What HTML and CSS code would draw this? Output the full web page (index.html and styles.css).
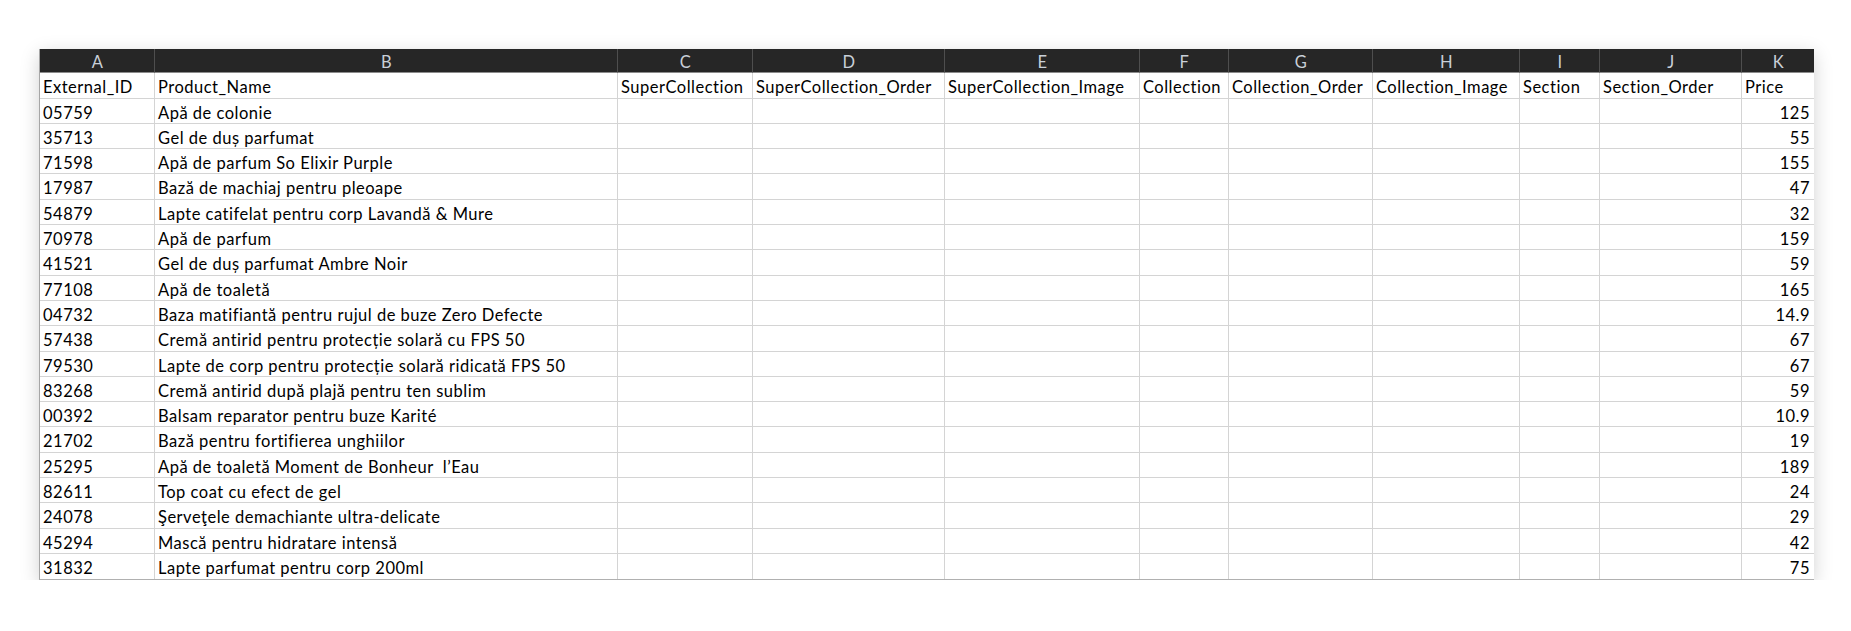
FILE: index.html
```html
<!DOCTYPE html>
<html lang="ro">
<head>
<meta charset="utf-8">
<title>Sheet</title>
<link rel="stylesheet" href="styles.css">
</head>
<body>
<div class="page">
  <div class="sheet">
    <div class="row head">
      <div class="c">A</div><div class="c">B</div><div class="c">C</div><div class="c">D</div><div class="c">E</div><div class="c">F</div><div class="c">G</div><div class="c">H</div><div class="c">I</div><div class="c">J</div><div class="c">K</div>
    </div>
    <div class="row">
      <div class="c">External_ID</div><div class="c">Product_Name</div><div class="c">SuperCollection</div><div class="c">SuperCollection_Order</div><div class="c">SuperCollection_Image</div><div class="c">Collection</div><div class="c">Collection_Order</div><div class="c">Collection_Image</div><div class="c">Section</div><div class="c">Section_Order</div><div class="c">Price</div>
    </div>
    <div class="row"><div class="c">05759</div><div class="c">Apă de colonie</div><div class="c"></div><div class="c"></div><div class="c"></div><div class="c"></div><div class="c"></div><div class="c"></div><div class="c"></div><div class="c"></div><div class="c num">125</div></div>
    <div class="row"><div class="c">35713</div><div class="c">Gel de duș parfumat</div><div class="c"></div><div class="c"></div><div class="c"></div><div class="c"></div><div class="c"></div><div class="c"></div><div class="c"></div><div class="c"></div><div class="c num">55</div></div>
    <div class="row"><div class="c">71598</div><div class="c">Apă de parfum So Elixir Purple</div><div class="c"></div><div class="c"></div><div class="c"></div><div class="c"></div><div class="c"></div><div class="c"></div><div class="c"></div><div class="c"></div><div class="c num">155</div></div>
    <div class="row"><div class="c">17987</div><div class="c">Bază de machiaj pentru pleoape</div><div class="c"></div><div class="c"></div><div class="c"></div><div class="c"></div><div class="c"></div><div class="c"></div><div class="c"></div><div class="c"></div><div class="c num">47</div></div>
    <div class="row"><div class="c">54879</div><div class="c">Lapte catifelat pentru corp Lavandă &amp; Mure</div><div class="c"></div><div class="c"></div><div class="c"></div><div class="c"></div><div class="c"></div><div class="c"></div><div class="c"></div><div class="c"></div><div class="c num">32</div></div>
    <div class="row"><div class="c">70978</div><div class="c">Apă de parfum</div><div class="c"></div><div class="c"></div><div class="c"></div><div class="c"></div><div class="c"></div><div class="c"></div><div class="c"></div><div class="c"></div><div class="c num">159</div></div>
    <div class="row"><div class="c">41521</div><div class="c">Gel de duș parfumat Ambre Noir</div><div class="c"></div><div class="c"></div><div class="c"></div><div class="c"></div><div class="c"></div><div class="c"></div><div class="c"></div><div class="c"></div><div class="c num">59</div></div>
    <div class="row"><div class="c">77108</div><div class="c">Apă de toaletă</div><div class="c"></div><div class="c"></div><div class="c"></div><div class="c"></div><div class="c"></div><div class="c"></div><div class="c"></div><div class="c"></div><div class="c num">165</div></div>
    <div class="row"><div class="c">04732</div><div class="c">Baza matifiantă pentru rujul de buze Zero Defecte</div><div class="c"></div><div class="c"></div><div class="c"></div><div class="c"></div><div class="c"></div><div class="c"></div><div class="c"></div><div class="c"></div><div class="c num">14.9</div></div>
    <div class="row"><div class="c">57438</div><div class="c">Cremă antirid pentru protecție solară cu FPS 50</div><div class="c"></div><div class="c"></div><div class="c"></div><div class="c"></div><div class="c"></div><div class="c"></div><div class="c"></div><div class="c"></div><div class="c num">67</div></div>
    <div class="row"><div class="c">79530</div><div class="c">Lapte de corp pentru protecție solară ridicată FPS 50</div><div class="c"></div><div class="c"></div><div class="c"></div><div class="c"></div><div class="c"></div><div class="c"></div><div class="c"></div><div class="c"></div><div class="c num">67</div></div>
    <div class="row"><div class="c">83268</div><div class="c">Cremă antirid după plajă pentru ten sublim</div><div class="c"></div><div class="c"></div><div class="c"></div><div class="c"></div><div class="c"></div><div class="c"></div><div class="c"></div><div class="c"></div><div class="c num">59</div></div>
    <div class="row"><div class="c">00392</div><div class="c">Balsam reparator pentru buze Karité</div><div class="c"></div><div class="c"></div><div class="c"></div><div class="c"></div><div class="c"></div><div class="c"></div><div class="c"></div><div class="c"></div><div class="c num">10.9</div></div>
    <div class="row"><div class="c">21702</div><div class="c">Bază pentru fortifierea unghiilor</div><div class="c"></div><div class="c"></div><div class="c"></div><div class="c"></div><div class="c"></div><div class="c"></div><div class="c"></div><div class="c"></div><div class="c num">19</div></div>
    <div class="row"><div class="c">25295</div><div class="c">Apă de toaletă Moment de Bonheur &nbsp;l’Eau</div><div class="c"></div><div class="c"></div><div class="c"></div><div class="c"></div><div class="c"></div><div class="c"></div><div class="c"></div><div class="c"></div><div class="c num">189</div></div>
    <div class="row"><div class="c">82611</div><div class="c">Top coat cu efect de gel</div><div class="c"></div><div class="c"></div><div class="c"></div><div class="c"></div><div class="c"></div><div class="c"></div><div class="c"></div><div class="c"></div><div class="c num">24</div></div>
    <div class="row"><div class="c">24078</div><div class="c">Şerveţele demachiante ultra-delicate</div><div class="c"></div><div class="c"></div><div class="c"></div><div class="c"></div><div class="c"></div><div class="c"></div><div class="c"></div><div class="c"></div><div class="c num">29</div></div>
    <div class="row"><div class="c">45294</div><div class="c">Mască pentru hidratare intensă</div><div class="c"></div><div class="c"></div><div class="c"></div><div class="c"></div><div class="c"></div><div class="c"></div><div class="c"></div><div class="c"></div><div class="c num">42</div></div>
    <div class="row"><div class="c">31832</div><div class="c">Lapte parfumat pentru corp 200ml</div><div class="c"></div><div class="c"></div><div class="c"></div><div class="c"></div><div class="c"></div><div class="c"></div><div class="c"></div><div class="c"></div><div class="c num">75</div></div>
  </div>
</div>
</body>
</html>
```

FILE: styles.css
```css
html, body {
  margin: 0;
  padding: 0;
  background: #ffffff;
}

.page {
  padding: 49px 0 0 39px;
}

.sheet {
  width: 1775px;
  background: #ffffff;
  box-shadow: 0 5px 18px rgba(0, 0, 0, 0.18);
  border-left: 1px solid #a6a6a6;
  border-bottom: 1px solid #b0b0b0;
  box-sizing: border-box;
  font-family: Lato, "Liberation Sans", sans-serif;
  font-size: 16.5px;
  letter-spacing: 0.5px;
  color: #000000;
}

.row {
  display: grid;
  grid-template-columns: 115px 463px 135px 192px 195px 89px 144px 147px 80px 142px 72px;
  height: 25.3px;
}

.row:last-child .c {
  border-bottom: none;
}

.c {
  box-sizing: border-box;
  border-right: 1px solid #d4d4d4;
  border-bottom: 1px solid #d4d4d4;
  padding: 4px 2px 0 3px;
  white-space: pre;
  overflow: hidden;
  line-height: 20px;
}

.c:last-child {
  border-right: none;
}

.num {
  text-align: right;
  padding-right: 4px;
}

.head {
  height: 24.3px;
  background: #262626;
}

.head .c {
  text-align: center;
  color: #c9d0d8;
  border-right: 1px solid #4e4e4e;
  border-bottom: 1px solid #8c8c8c;
  padding-top: 3px;
}

.head .c:last-child {
  border-right: none;
}
```
